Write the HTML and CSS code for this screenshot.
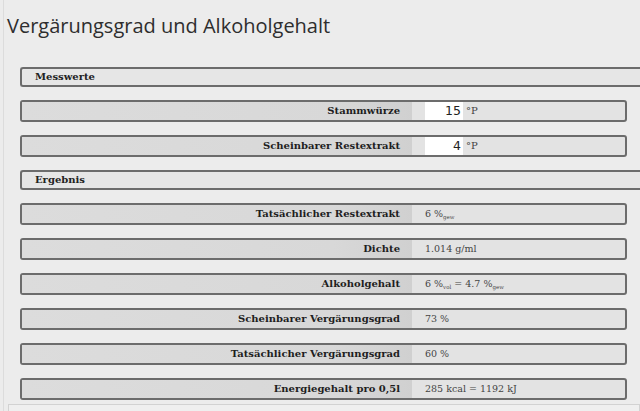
FILE: index.html
```html
<!DOCTYPE html>
<html lang="de">
<head>
<meta charset="utf-8">
<title>Vergärungsgrad und Alkoholgehalt</title>
<link rel="stylesheet" href="styles.css">
</head>
<body>
<div class="page">
  <h1 class="title">Vergärungsgrad und Alkoholgehalt</h1>
  <div class="calc">
    <div class="section">Messwerte</div>
    <div class="row">
      <div class="label">Stammwürze</div>
      <div class="value"><span class="num">15</span><span class="unit">°P</span></div>
    </div>
    <div class="row">
      <div class="label">Scheinbarer Restextrakt</div>
      <div class="value"><span class="num">4</span><span class="unit">°P</span></div>
    </div>
    <div class="section">Ergebnis</div>
    <div class="row">
      <div class="label">Tatsächlicher Restextrakt</div>
      <div class="value">6 %<sub>gew</sub></div>
    </div>
    <div class="row">
      <div class="label">Dichte</div>
      <div class="value">1.014 g/ml</div>
    </div>
    <div class="row">
      <div class="label">Alkoholgehalt</div>
      <div class="value">6 %<sub>vol</sub> = 4.7 %<sub>gew</sub></div>
    </div>
    <div class="row">
      <div class="label">Scheinbarer Vergärungsgrad</div>
      <div class="value">73 %</div>
    </div>
    <div class="row">
      <div class="label">Tatsächlicher Vergärungsgrad</div>
      <div class="value">60 %</div>
    </div>
    <div class="row">
      <div class="label">Energiegehalt pro 0,5l</div>
      <div class="value">285 kcal = 1192 kJ</div>
    </div>
  </div>
  <div class="footer"></div>
</div>
</body>
</html>
```
FILE: styles.css
```css
html, body {
  margin: 0;
  padding: 0;
  background: #ececec;
  overflow: hidden;
}
body {
  width: 640px;
  height: 411px;
}
.page {
  border-left: 1px solid #dcdcdc;
  margin-left: 3px;
  height: 411px;
  box-sizing: border-box;
}
.title {
  margin: 0;
  padding: 13px 0 0 3px;
  height: 55px;
  box-sizing: border-box;
  font-family: "Open Sans", sans-serif;
  font-weight: 500;
  font-size: 20px;
  line-height: 26px;
  color: #2e2e2e;
}
.calc {
  padding-left: 16px;
  padding-top: 12px;
}
.section {
  height: 20px;
  box-sizing: border-box;
  border: 2px solid #6c6c6c;
  border-right: none;
  border-radius: 3px 0 0 3px;
  background: #e6e6e6;
  margin-right: -20px;
  margin-bottom: 13px;
  padding-left: 13px;
  font-family: "DejaVu Serif", serif;
  font-weight: bold;
  font-size: 10px;
  line-height: 16px;
  color: #222;
}
.row {
  display: flex;
  width: 607px;
  height: 22px;
  box-sizing: border-box;
  border: 2px solid #6c6c6c;
  border-radius: 3px;
  background: #e3e3e3;
  margin-bottom: 13px;
}
.label {
  width: 390px;
  flex: none;
  background: linear-gradient(to right, #dcdcdc 0%, #d8d8d8 80%, #d0d0d0 100%);
  text-align: right;
  padding-right: 12px;
  box-sizing: border-box;
  font-family: "DejaVu Serif", serif;
  font-weight: bold;
  font-size: 10px;
  line-height: 18px;
  color: #1e1e1e;
}
.value {
  padding-left: 13px;
  font-family: "DejaVu Serif", serif;
  font-size: 9.5px;
  line-height: 18px;
  color: #444;
  white-space: nowrap;
}
.value sub {
  font-size: 5.5px;
  vertical-align: -2px;
}
.num {
  display: inline-block;
  width: 38px;
  height: 18px;
  box-sizing: border-box;
  background: #fff;
  text-align: right;
  padding-right: 2px;
  font-family: "DejaVu Sans", sans-serif;
  font-size: 12.5px;
  line-height: 18px;
  color: #222;
  vertical-align: top;
}
.unit {
  margin-left: 3px;
  font-family: "DejaVu Serif", serif;
  font-size: 10px;
  color: #444;
}
.footer {
  margin-left: 4px;
  margin-top: -9px;
  height: 20px;
  border: 1px solid #d2d2d2;
  background: #efefef;
}
```
